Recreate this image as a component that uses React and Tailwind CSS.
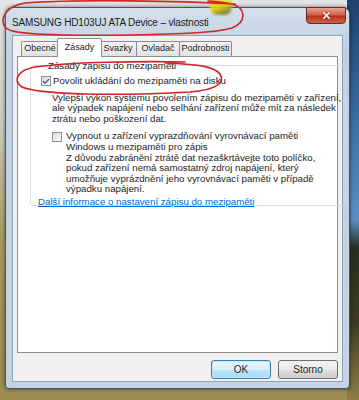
import { Check, X } from 'lucide-react';

const ZALOZKY = [
  { nazev: 'Obecné', sirka: 'w-[38px]' },
  { nazev: 'Zásady', sirka: 'w-[45px]' },
  { nazev: 'Svazky', sirka: 'w-[38px]' },
  { nazev: 'Ovladač', sirka: 'w-[44px]' },
  { nazev: 'Podrobnosti', sirka: 'w-[53px]' },
];

function Zalozka({ nazev, sirka, aktivni }) {
  if (aktivni) {
    return (
      <div className={`${sirka} h-[19px] -mx-[2px] -mb-px relative z-10 pt-[2px] text-center bg-white border border-b-0 border-[#898c95] rounded-t-[2px] text-[#1e1e1e]`}>
        {nazev}
      </div>
    );
  }
  return (
    <div className={`${sirka} h-[15px] -ml-px leading-[13px] text-center bg-[linear-gradient(to_bottom,#f3f3f3,#e2e2e2)] border border-b-0 border-[#898c95] rounded-t-[2px] text-[#1e1e1e]`}>
      {nazev}
    </div>
  );
}

function Zaskrtavatko({ zaskrtnuto }) {
  return (
    <span className="w-[10px] h-[10px] shrink-0 border border-[#8f8f8f] bg-[linear-gradient(135deg,#dcdcdc,#fafafa)] flex items-center justify-center">
      {zaskrtnuto && <Check className="w-[9px] h-[9px] text-[#3c5a98]" strokeWidth={4} />}
    </span>
  );
}

export default function App() {
  return (
    <div className="relative w-[359px] h-[400px] overflow-hidden font-['Liberation_Sans',Arial,sans-serif] bg-[linear-gradient(to_bottom,#e3e6e8_0%,#cfd0c4_30%,#a89b62_60%,#9b8c52_100%)]">
      <div className="absolute right-0 top-0 w-[12px] h-[400px] bg-[linear-gradient(to_bottom,#1d426d_0%,#3b6ea4_30%,#5d8fc2_55%,#27301f_62%,#3a3a22_80%,#8e7f45_100%)]" />

      <div className="relative ml-[5px] mt-[7px] w-[345px] h-[382px] rounded-t-[7px] rounded-b-[4px] border border-[#44566b] bg-[linear-gradient(to_bottom,#d3dfeb,#bfd0e2_12%,#c4d4e4)] flex flex-col shadow-[0_0_4px_rgba(0,0,0,0.5)]">
        <div className="h-[27px] shrink-0 flex items-start pl-[6px] relative">
          <span className="mt-[8px] text-[10px] tracking-[-0.15px] leading-[14px] text-[#1a1a1a] whitespace-nowrap">SAMSUNG HD103UJ ATA Device – vlastnosti</span>
          <div className="absolute right-[3px] -top-px w-[40px] h-[17px] rounded-b-[4px] border border-[#6b2a22] bg-[linear-gradient(to_bottom,#e9a393,#d0604c_45%,#b8321e_55%,#d0614a)] flex items-center justify-center">
            <X className="w-[11px] h-[11px] text-white drop-shadow-[0_0_1px_#5a1a10]" strokeWidth={3.5} />
          </div>
        </div>

        <div className="mx-[6px] mb-[6px] flex-1 bg-[#f0f0f0] border border-[#8fa2b7] flex flex-col text-[9.7px] whitespace-nowrap">
          <div className="flex items-end pl-[9px] pt-[2px] text-[9px]">
            {ZALOZKY.map((z) => (
              <Zalozka key={z.nazev} nazev={z.nazev} sirka={z.sirka} aktivni={z.nazev === 'Zásady'} />
            ))}
          </div>

          <div className="mx-[4px] h-[297px] bg-white border border-[#898c95] pt-[3px]">
            <fieldset className="ml-[12px] w-[296px] h-[146px] border border-[#d5dfe5] rounded-[3px] pl-[10px] pr-[4px] text-[#1e1e1e] leading-[10.6px]">
              <legend className="ml-[6px] px-[1px] leading-[11px]">Zásady zápisu do mezipaměti</legend>

              <div className="flex items-center gap-[2px] mt-[5px]">
                <Zaskrtavatko zaskrtnuto />
                <span>Povolit ukládání do mezipaměti na disku</span>
              </div>

              <p className="pl-[11px] mt-[6px]">
                Vylepší výkon systému povolením zápisu do mezipaměti v zařízení,
                <br />
                ale výpadek napájení nebo selhání zařízení může mít za následek
                <br />
                ztrátu nebo poškození dat.
              </p>

              <div className="flex items-start gap-[4px] pl-[11px] mt-[7px]">
                <span className="mt-px">
                  <Zaskrtavatko />
                </span>
                <p>
                  Vypnout u zařízení vyprazdňování vyrovnávací paměti
                  <br />
                  Windows u mezipaměti pro zápis
                  <br />
                  Z důvodu zabránění ztrátě dat nezaškrtávejte toto políčko,
                  <br />
                  pokud zařízení nemá samostatný zdroj napájení, který
                  <br />
                  umožňuje vyprázdnění jeho vyrovnávací paměti v případě
                  <br />
                  výpadku napájení.
                </p>
              </div>

              <a className="block -ml-[3px] mt-[2px] text-[#0066cc] underline">Další informace o nastavení zápisu do mezipaměti</a>
            </fieldset>
          </div>

          <div className="flex justify-end gap-[7px] pt-[7px] pr-[4px]">
            <button className="w-[60px] h-[19px] rounded-[3px] border border-[#3c7fb1] bg-[linear-gradient(to_bottom,#eaf6fd,#d9f0fc_50%,#bee6fd_50%,#a7d9f5)] text-[10px] text-[#1e1e1e] shadow-[inset_0_0_0_1px_#c4e5f6]">
              OK
            </button>
            <button className="w-[60px] h-[19px] rounded-[3px] border border-[#707070] bg-[linear-gradient(to_bottom,#f2f2f2,#ebebeb_50%,#dddddd_50%,#cfcfcf)] text-[10px] text-[#1e1e1e]">
              Storno
            </button>
          </div>
        </div>
      </div>

      <div className="absolute left-[210px] top-0 w-[22px] h-[15px] rounded-b-[8px] bg-[linear-gradient(160deg,#f5e800_0%,#e8d400_45%,#8a8a2a_75%,#5a6a3a_100%)] opacity-90 blur-[1px]" />

      <svg className="absolute inset-0 pointer-events-none" width="359" height="400" fill="none" stroke="#d42424" strokeWidth="1.6" strokeLinecap="round">
        <path d="M 235 4 C 180 1, 80 -1, 25 3 C 5 6, -1 20, 6 28 C 12 35, 60 36, 130 35 C 180 34, 215 33, 232 28 C 247 22, 246 8, 232 4 C 222 2, 214 1, 208 1" />
        <path d="M 185 62 C 140 61, 70 62, 35 67 C 18 70, 12 80, 22 87 C 40 95, 120 96, 190 92 C 215 90, 226 83, 220 74 C 214 66, 195 64, 165 63" />
      </svg>
    </div>
  );
}
